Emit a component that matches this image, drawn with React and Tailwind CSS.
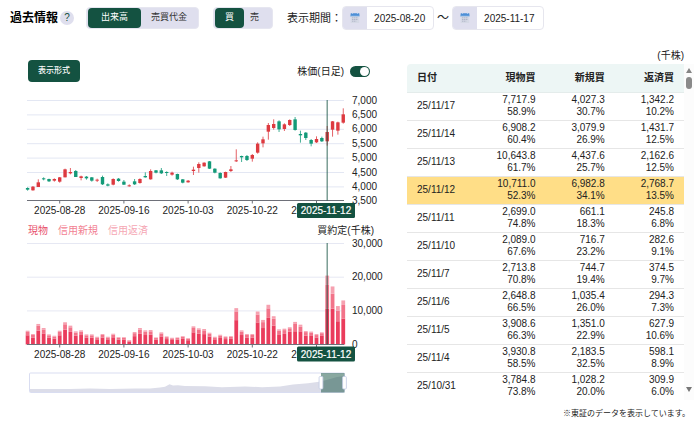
import { useState } from 'react'

const ROWS = [
  ['25/11/17', '7,717.9', '58.9%', '4,027.3', '30.7%', '1,342.2', '10.2%'],
  ['25/11/14', '6,908.2', '60.4%', '3,079.9', '26.9%', '1,431.7', '12.5%'],
  ['25/11/13', '10,643.8', '61.7%', '4,437.6', '25.7%', '2,162.6', '12.5%'],
  ['25/11/12', '10,711.0', '52.3%', '6,982.8', '34.1%', '2,768.7', '13.5%'],
  ['25/11/11', '2,699.0', '74.8%', '661.1', '18.3%', '245.8', '6.8%'],
  ['25/11/10', '2,089.0', '67.6%', '716.7', '23.2%', '282.6', '9.1%'],
  ['25/11/7', '2,713.8', '70.8%', '744.7', '19.4%', '374.5', '9.7%'],
  ['25/11/6', '2,648.8', '66.5%', '1,035.4', '26.0%', '294.3', '7.3%'],
  ['25/11/5', '3,908.6', '66.3%', '1,351.0', '22.9%', '627.9', '10.6%'],
  ['25/11/4', '3,930.8', '58.5%', '2,183.5', '32.5%', '598.1', '8.9%'],
  ['25/10/31', '3,784.8', '73.8%', '1,028.2', '20.0%', '309.9', '6.0%'],
]

// [up, body top, body bottom, high, low], in thirds of a chart unit
const CANDLES = [
  [0, 294, 299, 292, 302], [1, 290, 301, 288, 302], [1, 277, 291, 268, 291], [0, 265, 268, 262, 271],
  [0, 267, 274, 266, 276], [1, 267, 272, 265, 275], [1, 262, 275, 261, 278], [1, 238, 262, 236, 262],
  [1, 246, 250, 234, 253], [0, 243, 261, 240, 261], [1, 259, 264, 257, 271], [0, 260, 265, 258, 269],
  [0, 262, 272, 261, 275], [1, 269, 272, 266, 276], [0, 261, 283, 257, 285], [0, 283, 287, 280, 289],
  [1, 267, 284, 265, 286], [0, 266, 273, 264, 275], [0, 275, 284, 270, 285], [1, 286, 289, 283, 290],
  [0, 274, 283, 267, 285], [1, 267, 279, 265, 281], [0, 258, 262, 247, 263], [1, 243, 268, 238, 269],
  [0, 241, 248, 240, 250], [0, 241, 250, 234, 252], [0, 246, 249, 244, 258], [1, 248, 254, 245, 257],
  [0, 252, 268, 251, 270], [0, 268, 278, 267, 280], [1, 272, 277, 270, 278], [1, 239, 243, 230, 255],
  [1, 222, 234, 217, 248], [1, 218, 229, 217, 230], [0, 214, 236, 213, 237], [0, 236, 248, 235, 250],
  [0, 249, 265, 247, 266], [1, 246, 263, 245, 264], [1, 238, 243, 228, 246], [1, 211, 214, 178, 216],
  [0, 198, 202, 197, 216], [0, 198, 210, 195, 213], [1, 195, 206, 192, 215], [1, 161, 188, 157, 191],
  [1, 148, 160, 140, 172], [1, 105, 125, 99, 149], [1, 102, 114, 88, 119], [0, 94, 118, 91, 126],
  [1, 103, 117, 100, 123], [1, 90, 105, 88, 108], [0, 88, 120, 81, 122], [0, 132, 136, 122, 158],
  [0, 128, 144, 126, 150], [0, 150, 161, 147, 169], [1, 147, 157, 139, 159], [0, 144, 154, 140, 156],
  [1, 126, 154, 108, 167], [1, 94, 119, 93, 140], [1, 97, 122, 95, 134], [1, 73, 98, 55, 101],
]

// total volume per day, in hundreds of thousands of shares
const TOTALS = [
  41, 31, 61, 49, 30, 26, 41, 66, 56, 39, 42, 30, 30, 23, 31, 23, 32, 22, 22, 13,
  37, 49, 42, 43, 21, 36, 24, 20, 21, 25, 19, 54, 48, 46, 35, 23, 29, 24, 25, 108,
  42, 31, 31, 98, 73, 118, 84, 45, 47,
]

const toNumber = (s) => parseFloat(s.replace(',', '')) / 100

const VOLUMES = [
  ...TOTALS.map((t) => [t * 0.67, t * 0.24, t * 0.09]),
  ...[...ROWS].reverse().map((r) => [toNumber(r[1]), toNumber(r[3]), toNumber(r[5])]),
]

const VOLUME_COLORS = ['#ea3c5c', '#f27389', '#f6a1b0']
const TICKS = [[6, '2025-08-28'], [18, '2025-09-16'], [30, '2025-10-03'], [42, '2025-10-22'], [54, '2025-11-10']]
const SELECTED = 56

const xOf = (i) => 27.6 + i * 5.35

function XAxis({ y }) {
  return (
    <g>
      <line x1="27" x2="344" y1={y} y2={y} stroke="#6e7079" />
      {TICKS.map(([i, label]) => (
        <g key={label}>
          <line x1={xOf(i)} x2={xOf(i)} y1={y} y2={y + 3} stroke="#6e7079" />
          <text x={xOf(i)} y={y + 13} textAnchor="middle">{label}</text>
        </g>
      ))}
    </g>
  )
}

function Badge({ y }) {
  return (
    <g>
      <rect x="297" y={y} width="58" height="15" rx="1.5" fill="#145241" />
      <text x="326" y={y + 11} textAnchor="middle" fill="#fff" stroke="#fff" strokeWidth="0.2">2025-11-12</text>
    </g>
  )
}

function PriceChart() {
  const labels = ['7,000', '6,500', '6,000', '5,500', '5,000', '4,500', '4,000', '3,500']
  return (
    <svg viewBox="0 0 400 130" className="block w-full overflow-visible text-[10px]" fill="#222" role="img" aria-label="株価(日足)">
      {labels.map((label, i) => (
        <g key={label}>
          {i < 7 && <line x1="27" x2="344" y1={10.5 + i * 14.4} y2={10.5 + i * 14.4} stroke="#e3e7f3" />}
          <text x="352" y={13.5 + i * 14.4}>{label}</text>
        </g>
      ))}
      <XAxis y={110.5} />
      {CANDLES.map(([up, top, bottom, high, low], i) => {
        const color = up ? '#dd3a40' : '#139a78'
        return (
          <g key={i}>
            <line x1={xOf(i)} x2={xOf(i)} y1={high / 3} y2={low / 3} stroke={color} strokeWidth="0.8" />
            <rect x={xOf(i) - 1.7} y={top / 3} width="3.4" height={(bottom - top) / 3} fill={color} />
          </g>
        )
      })}
      <line x1={xOf(SELECTED)} x2={xOf(SELECTED)} y1="10" y2="110.5" stroke="#145241" strokeOpacity="0.65" strokeWidth="1.3" />
      <Badge y={113} />
    </svg>
  )
}

function VolumeChart() {
  const base = 104.5
  return (
    <svg viewBox="0 0 400 124" className="block w-full overflow-visible text-[10px]" fill="#222" role="img" aria-label="買約定(千株)">
      {['30,000', '20,000', '10,000', '0'].map((label, i) => (
        <g key={label}>
          {i < 3 && <line x1="27" x2="344" y1={3.5 + i * 33.7} y2={3.5 + i * 33.7} stroke="#e6e8f3" />}
          <text x="352" y={6.5 + i * 33.7}>{label}</text>
        </g>
      ))}
      {VOLUMES.map((parts, i) => {
        let y = base
        return parts.map((value, n) => {
          const h = value * 0.3367
          y -= h
          return <rect key={`${i}-${n}`} x={xOf(i) - 1.9} y={y} width="3.8" height={h} fill={VOLUME_COLORS[n]} />
        })
      })}
      <XAxis y={base} />
      <line x1={xOf(SELECTED)} x2={xOf(SELECTED)} y1="3" y2={base} stroke="#145241" strokeOpacity="0.65" strokeWidth="1.3" />
      <Badge y={106.5} />
    </svg>
  )
}

function RangeSlider() {
  return (
    <svg viewBox="0 0 400 24" className="mt-2 block w-full">
      <rect x="29.5" y="1" width="315" height="19.5" rx="1" fill="#fff" stroke="#d9ddf1" />
      <path
        d="M30 20V17H70L90 16.6L110 17L135 16.4L150 16.6L160 15.5L165 14.8L169.5 12.3L173 13.6L178 13.2L185 14L205 14.3L222 15.2L245 14.4L262 15.2L280 14.6L293 12.5L308 11.2L321 9.5L330 7L337 5L344 4V20Z"
        fill="#dcdde9"
      />
      <rect x="321" y="1" width="23.5" height="19.5" fill="#145241" fillOpacity="0.5" />
      {[321, 344.5].map((x) => (
        <rect key={x} x={x - 1.9} y="4.5" width="3.8" height="12.5" rx="1" fill="#fff" stroke="#c3cbe4" strokeWidth="0.8" />
      ))}
    </svg>
  )
}

function Segmented({ options, value, onChange, pad }) {
  return (
    <div className="flex h-[22px] rounded border border-[#e6e6f0] bg-[#dfdfee] px-px">
      {options.map((option) => (
        <button
          key={option}
          type="button"
          aria-pressed={option === value}
          onClick={() => onChange(option)}
          className={`${pad} rounded text-[9px] ${option === value ? 'bg-[#145241] text-white' : 'text-[#333]'}`}
        >
          {option}
        </button>
      ))}
    </div>
  )
}

function CalendarIcon() {
  return (
    <svg viewBox="0 0 12 12" className="size-3">
      <rect x="1.6" y="3" width="8.6" height="8" rx="0.6" fill="#d5d9e5" />
      <path d="M1.6 1.8Q1.6 1.2 2.4 1.2H9.8Q10.4 1.2 10.4 1.8V4H1.6Z" fill="#4d8fd6" />
      <path d="M1 4H10.8" stroke="#81b2e5" strokeWidth="0.8" />
      <path d="M3.2 5.8H9M3.2 7.5H9M3.2 9.2H7.4" stroke="#9ba2b8" strokeWidth="0.8" strokeDasharray="1.2 0.8" />
      <path d="M3.5 .7V2M8.5 .7V2" stroke="#c6dbf2" strokeWidth="0.7" />
    </svg>
  )
}

function DateField({ label, value, onChange }) {
  return (
    <label className="flex h-6 w-[92px] overflow-hidden rounded border border-[#e6e6ee] bg-white">
      <span className="flex w-6 shrink-0 items-center justify-center bg-[#dfdfee]">
        <CalendarIcon />
      </span>
      <input
        type="text"
        aria-label={label}
        value={value}
        onChange={(e) => onChange(e.target.value)}
        className="w-full min-w-0 pl-[7px] text-[10px] text-[#222] outline-none"
      />
    </label>
  )
}

function HistoryTable() {
  return (
    <table className="w-full table-fixed border-collapse text-[10px] leading-3 text-[#222]">
      <thead>
        <tr className="h-7 border-b border-[#e4eceb] bg-[#edf6f5]">
          <th className="rounded-tl pl-2.5 text-left font-bold">日付</th>
          <th className="pr-2.5 text-right font-bold">現物買</th>
          <th className="pr-2.5 text-right font-bold">新規買</th>
          <th className="pr-2.5 text-right font-bold">返済買</th>
        </tr>
      </thead>
      <tbody>
        {ROWS.map(([date, ...cells]) => (
          <tr key={date} className={`h-7 border-b border-[#e6e6e6] last:border-b-0 ${date === '25/11/12' ? 'bg-[#ffde87]' : ''}`}>
            <td className="pl-2.5">{date}</td>
            {[0, 2, 4].map((n) => (
              <td key={n} className="pr-2.5 text-right">
                {cells[n]}
                <br />
                {cells[n + 1]}
              </td>
            ))}
          </tr>
        ))}
      </tbody>
    </table>
  )
}

export default function App() {
  const [metric, setMetric] = useState('出来高')
  const [side, setSide] = useState('買')
  const [from, setFrom] = useState('2025-08-20')
  const [to, setTo] = useState('2025-11-17')
  const [showPrice, setShowPrice] = useState(true)

  return (
    <div className="min-h-screen bg-white font-['Liberation_Sans','Noto_Sans_CJK_JP',sans-serif] text-[#222]">
      <header className="flex h-9 items-center pl-2.5">
        <h1 className="text-[12px] font-bold text-black">過去情報</h1>
        <button type="button" aria-label="ヘルプ" className="ml-0.5 size-3.5 rounded-full bg-[#dfdfee] text-[10px] leading-[14px] text-[#145241]">
          ?
        </button>
        <div className="ml-3 flex items-center gap-3.5">
          <Segmented options={['出来高', '売買代金']} value={metric} onChange={setMetric} pad="px-[13px] last:px-2.5" />
          <Segmented options={['買', '売']} value={side} onChange={setSide} pad="px-2.5 last:pr-3 last:pl-1.5" />
          <span className="text-[11px]">表示期間：</span>
        </div>
        <DateField label="開始日" value={from} onChange={setFrom} />
        <span className="w-[18px] text-center text-[12px]">～</span>
        <DateField label="終了日" value={to} onChange={setTo} />
      </header>

      <main className="flex items-start">
        <section className="w-4/7 pt-6">
          <div className="flex h-[22px] items-center justify-between pr-[30px] pl-7">
            <button type="button" className="h-[22px] rounded bg-[#145241] px-2.5 text-[8px] font-medium text-white">
              表示形式
            </button>
            <label className="flex items-center gap-1.5 text-[10px]">
              株価(日足)
              <input
                type="checkbox"
                checked={showPrice}
                onChange={(e) => setShowPrice(e.target.checked)}
                className="flex h-[11px] w-5 appearance-none items-center rounded-full bg-gray-300 px-px before:size-[9px] before:rounded-full before:bg-white checked:justify-end checked:bg-[#145241]"
              />
            </label>
          </div>
          <div className="mt-2">
            <PriceChart />
          </div>
          <div className="flex h-5 items-center gap-2.5 pr-[26px] pl-7 text-[10px]">
            <span className="text-[#e8506b]">現物</span>
            <span className="text-[#f27f93]">信用新規</span>
            <span className="text-[#f5a7b4]">信用返済</span>
            <span className="ml-auto">買約定(千株)</span>
          </div>
          <VolumeChart />
          <RangeSlider />
        </section>

        <section className="w-3/7 pt-3 pr-1.5 pl-[7px]">
          <p className="pr-2.5 text-right text-[10px] leading-4">(千株)</p>
          <div className="flex">
            <HistoryTable />
            <div className="flex w-2.5 shrink-0 flex-col items-center justify-between bg-[#fcfcfc] pt-1 pb-2" aria-hidden="true">
              <div className="flex flex-col items-center gap-1">
                <svg viewBox="0 0 6 5" className="h-[5px] w-1.5"><path d="M3 0L6 5H0Z" fill="#858585" /></svg>
                <span className="h-3 w-1.5 rounded-full bg-[#8a8a8a]" />
              </div>
              <svg viewBox="0 0 6 5" className="h-[5px] w-1.5"><path d="M0 0H6L3 5Z" fill="#777" /></svg>
            </div>
          </div>
          <p className="mt-2 pr-1 text-right text-[8px]">※東証のデータを表示しています。</p>
        </section>
      </main>
    </div>
  )
}
